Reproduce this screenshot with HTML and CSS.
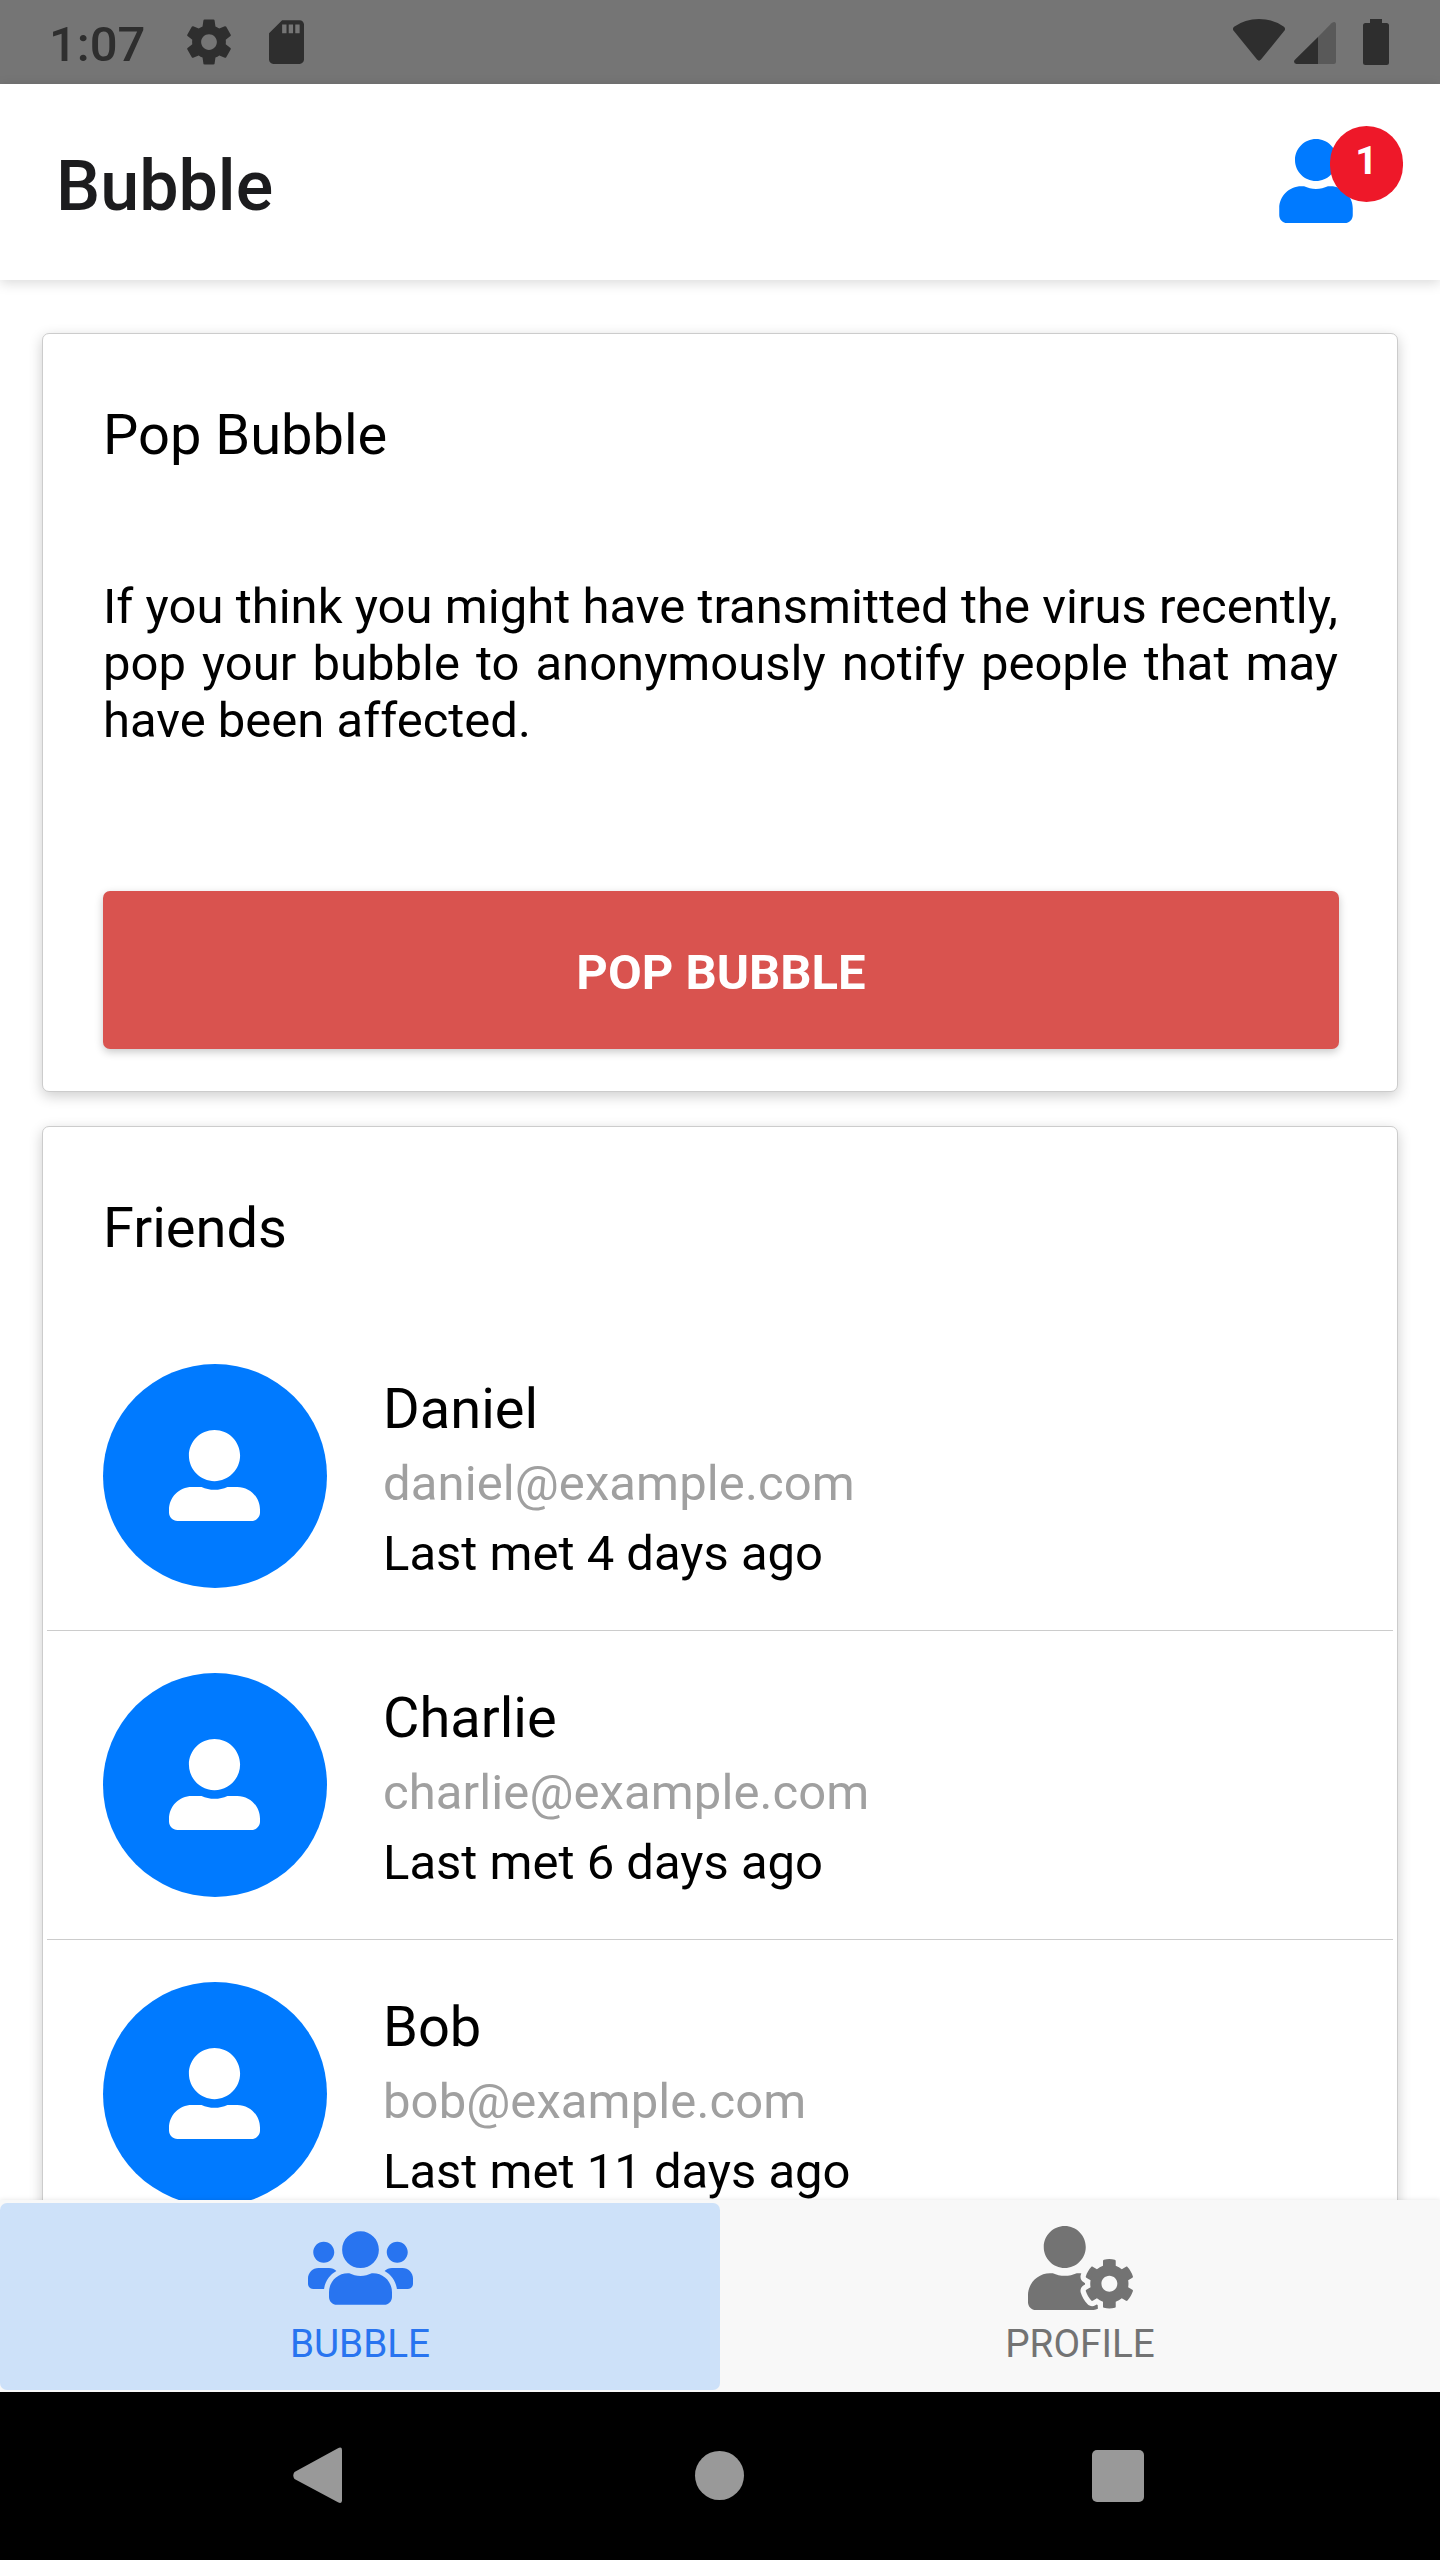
FILE: index.html
```html
<!DOCTYPE html>
<html lang="en">
<head>
<meta charset="utf-8">
<title>Bubble</title>
<link rel="stylesheet" href="styles.css">
</head>
<body>
<svg class="defs" aria-hidden="true">
  <symbol id="person" viewBox="0 0 512 512"><path d="M256 288c79.5 0 144-64.5 144-144S335.5 0 256 0 112 64.5 112 144s64.5 144 144 144zm128 32h-55.1c-22.2 10.2-46.9 16-72.9 16s-50.6-5.8-72.9-16H128C57.3 320 0 377.3 0 448v16c0 26.5 21.5 48 48 48h416c26.5 0 48-21.5 48-48v-16c0-70.7-57.3-128-128-128z"/></symbol>
</svg>
<div class="screen">
  <div class="status">
    <span class="clock">1:07</span>
    <svg class="st-gear" viewBox="0 0 24 24"><path d="M19.43 12.98c.04-.32.07-.64.07-.98s-.03-.66-.07-.98l2.11-1.65c.19-.15.24-.42.12-.64l-2-3.46c-.12-.22-.39-.3-.61-.22l-2.49 1c-.52-.4-1.08-.73-1.69-.98l-.38-2.65C14.46 2.18 14.25 2 14 2h-4c-.25 0-.46.18-.49.42l-.38 2.65c-.61.25-1.17.59-1.69.98l-2.49-1c-.23-.09-.49 0-.61.22l-2 3.46c-.13.22-.07.49.12.64l2.11 1.65c-.04.32-.07.65-.07.98s.03.66.07.98l-2.11 1.65c-.19.15-.24.42-.12.64l2 3.46c.12.22.39.3.61.22l2.49-1c.52.4 1.08.73 1.69.98l.38 2.65c.03.24.24.42.49.42h4c.25 0 .46-.18.49-.42l.38-2.65c.61-.25 1.17-.59 1.69-.98l2.49 1c.23.09.49 0 .61-.22l2-3.46c.12-.22.07-.49-.12-.64l-2.11-1.65zM12 15.500c-1.930 0-3.500-1.570-3.500-3.500s1.570-3.500 3.500-3.500 3.500 1.570 3.500 3.500-1.570 3.500-3.500 3.500z"/></svg>
    <svg class="st-sd" viewBox="4 2 16 20"><path d="M18 2h-8L4.020 8 4 20c0 1.100.9 2 2 2h12c1.100 0 2-.9 2-2V4c0-1.100-.9-2-2-2zm-6 6h-2V4h2v4zm3 0h-2V4h2v4zm3 0h-2V4h2v4z"/></svg>
    <span class="spacer"></span>
    <svg class="st-wifi" viewBox="0 0 54 44"><path d="M1.500 12.500Q-.8 10 1.500 8Q12.500 0 27 0T52.500 8Q54.800 10 52.500 12.500L29 41.500Q27 43.800 25 41.500Z"/></svg>
    <svg class="st-signal" viewBox="0 0 42 42"><path class="dim" d="M24 15 37.500 1.300Q39 0 40.500 0 42 .3 42 2V39.500Q42 42 39.500 42H24Z"/><path d="M24 15V42H2.500Q0 41.800 0 39.600 0 38.500 1.200 37.500Z"/></svg>
    <svg class="st-batt" viewBox="0 0 26 46"><path d="M7 0H19V4H23.500Q26 4 26 6.500V43.500Q26 46 23.500 46H2.500Q0 46 0 43.500V6.500Q0 4 2.500 4H7Z"/></svg>
  </div>
  <header class="header">
    <h1>Bubble</h1>
    <div class="requests">
      <svg viewBox="0 0 448 512"><path d="M224 256c70.7 0 128-57.3 128-128S294.7 0 224 0 96 57.3 96 128s57.3 128 128 128zm89.6 32h-16.7c-22.2 10.2-46.9 16-72.9 16s-50.6-5.8-72.9-16h-16.7C60.2 288 0 348.2 0 422.4V464c0 26.5 21.5 48 48 48h352c26.5 0 48-21.5 48-48v-41.6c0-74.2-60.2-134.4-134.4-134.4z"/></svg>
      <span class="badge">1</span>
    </div>
  </header>
  <main class="content">
    <section class="card">
      <h2>Pop Bubble</h2>
      <p class="note">If you think you might have transmitted the virus recently, pop your bubble to anonymously notify people that may have been affected.</p>
      <button class="pop" type="button">POP BUBBLE</button>
    </section>
    <section class="card">
      <h2>Friends</h2>
      <ul class="friends">
        <li>
          <span class="avatar"><svg><use href="#person"/></svg></span>
          <div class="info"><div class="name">Daniel</div><div class="mail">daniel@example.com</div><div class="met">Last met 4 days ago</div></div>
        </li>
        <li>
          <span class="avatar"><svg><use href="#person"/></svg></span>
          <div class="info"><div class="name">Charlie</div><div class="mail">charlie@example.com</div><div class="met">Last met 6 days ago</div></div>
        </li>
        <li>
          <span class="avatar"><svg><use href="#person"/></svg></span>
          <div class="info"><div class="name">Bob</div><div class="mail">bob@example.com</div><div class="met">Last met 11 days ago</div></div>
        </li>
      </ul>
    </section>
  </main>
  <nav class="tabs">
    <a class="tab active">
      <svg viewBox="0 0 640 512"><path d="M96 224c35.3 0 64-28.7 64-64s-28.7-64-64-64-64 28.7-64 64 28.7 64 64 64zm448 0c35.3 0 64-28.7 64-64s-28.7-64-64-64-64 28.7-64 64 28.7 64 64 64zm32 32h-64c-17.6 0-33.5 7.1-45.1 18.6 40.3 22.1 68.9 62 75.1 109.4h66c17.7 0 32-14.3 32-32v-32c0-35.3-28.7-64-64-64zm-256 0c61.9 0 112-50.1 112-112S381.9 32 320 32 208 82.1 208 144s50.1 112 112 112zm76.8 32h-8.3c-20.8 10-43.9 16-68.5 16s-47.6-6-68.5-16h-8.3C179.6 288 128 339.6 128 403.2V432c0 26.5 21.5 48 48 48h288c26.5 0 48-21.5 48-48v-28.8c0-63.6-51.6-115.2-115.2-115.2zm-223.7-13.4C161.5 263.1 145.6 256 128 256H64c-35.3 0-64 28.7-64 64v32c0 17.7 14.3 32 32 32h65.9c6.3-47.4 34.9-87.3 75.2-109.4z"/></svg>
      <span>BUBBLE</span>
    </a>
    <a class="tab">
      <svg viewBox="0 0 640 512"><path d="M610.5 373.3c2.6-14.1 2.6-28.5 0-42.6l25.8-14.9c3-1.7 4.3-5.2 3.3-8.5-6.7-21.6-18.2-41.2-33.2-57.4-2.3-2.5-6-3.1-9-1.4l-25.8 14.9c-10.9-9.3-23.4-16.5-36.9-21.3v-29.8c0-3.4-2.4-6.4-5.7-7.1-22.3-5-45-4.8-66.2 0-3.3.7-5.7 3.7-5.7 7.1v29.8c-13.5 4.8-26 12-36.9 21.3l-25.8-14.9c-2.9-1.7-6.7-1.1-9 1.4-15 16.2-26.5 35.8-33.2 57.4-1 3.3.4 6.8 3.3 8.5l25.8 14.9c-2.6 14.1-2.6 28.5 0 42.6l-25.8 14.9c-3 1.7-4.3 5.2-3.3 8.5 6.7 21.6 18.2 41.1 33.2 57.4 2.3 2.5 6 3.1 9 1.4l25.8-14.9c10.9 9.3 23.4 16.5 36.9 21.3v29.8c0 3.4 2.4 6.4 5.7 7.1 22.3 5 45 4.8 66.2 0 3.3-.7 5.7-3.7 5.7-7.1v-29.8c13.5-4.8 26-12 36.9-21.3l25.8 14.9c2.9 1.7 6.7 1.1 9-1.4 15-16.2 26.5-35.8 33.2-57.4 1-3.3-.4-6.8-3.3-8.5l-25.8-14.9zM496 400.5c-26.8 0-48.5-21.8-48.5-48.5s21.8-48.5 48.5-48.5 48.5 21.8 48.5 48.5-21.7 48.5-48.5 48.5zM224 256c70.7 0 128-57.3 128-128S294.7 0 224 0 96 57.3 96 128s57.3 128 128 128zm201.2 226.5c-2.3-1.2-4.6-2.6-6.8-3.900l-7.900 4.600c-6 3.400-12.800 5.300-19.600 5.300-10.900 0-21.400-4.600-28.900-12.600-18.300-19.800-32.300-43.900-40.200-69.600-5.500-17.700 1.900-36.400 17.900-45.700l7.900-4.600c-.1-2.600-.1-5.200 0-7.800l-7.900-4.600c-16-9.200-23.400-28-17.900-45.700.9-2.900 2.200-5.800 3.200-8.700-3.800-.3-7.500-1.200-11.400-1.200h-16.700c-22.200 10.200-46.900 16-72.900 16s-50.600-5.800-72.900-16h-16.700C60.200 288 0 348.200 0 422.400V464c0 26.500 21.500 48 48 48h352c10.100 0 19.500-3.200 27.200-8.500-1.200-3.800-2-7.700-2-11.800v-9.200z"/></svg>
      <span>PROFILE</span>
    </a>
  </nav>
  <div class="sysnav">
    <svg class="back" viewBox="0 0 50 57"><path d="M1.500 25 44.500 1.500Q49 -1 49 3V53.500Q49 57.500 44.500 55L1.500 32Q-1 28.500 1.500 25Z"/></svg>
    <span class="home"></span>
    <span class="recent"></span>
  </div>
</div>
</body>
</html>
```
FILE: styles.css
```css
* { box-sizing: border-box; }
body { margin: 0; background: #fff; font-family: Roboto, sans-serif; color: #000; }
h1, h2, p, ul { margin: 0; padding: 0; }
svg { display: block; flex: none; }
.defs { display: none; }

.screen {
  width: 1440px;
  height: 2560px;
  display: grid;
  grid-template-rows: 84px 196px 1920px 192px 168px;
  overflow: hidden;
}

/* Android status bar */
.status {
  display: flex;
  align-items: flex-start;
  background: #757575;
  fill: #2e2e2e;
  color: #2e2e2e;
  padding: 0 51px 0 49px;
}
.clock { font-size: 49px; font-weight: 500; line-height: 57px; width: 133px; padding-top: 16px; }
.st-gear { width: 54px; height: 54px; margin-top: 15px; }
.st-sd { width: 35px; height: 44px; margin: 20px 0 0 33px; }
.spacer { flex: 1; }
.st-wifi { width: 54px; height: 43px; margin-top: 19px; }
.st-signal { width: 42px; height: 42px; margin: 22px 0 0 8px; }
.st-batt { width: 26px; height: 46px; margin: 19px 0 0 27px; }
.dim { fill: #595959; }

.header {
  display: flex;
  justify-content: space-between;
  align-items: center;
  background: #fff;
  padding: 0 87px 0 56px;
  box-shadow: 0 3px 12px rgba(0, 0, 0, .15);
  z-index: 1;
}
.header h1 { font-size: 70px; font-weight: 500; line-height: 82px; padding-top: 7px; color: #1c1c1e; }
.requests { position: relative; width: 74px; height: 84px; margin-bottom: 2px; fill: #007aff; }
.requests svg { width: 74px; height: 84px; }
.badge {
  position: absolute;
  left: 51px;
  top: -13px;
  width: 73px;
  height: 76px;
  border-radius: 37px;
  background: #ee1829;
  color: #fff;
  font-size: 39px;
  font-weight: 700;
  line-height: 71px;
  text-align: center;
}

.content {
  display: flex;
  flex-direction: column;
  gap: 34px;
  padding: 53px 42px 0;
  overflow: hidden;
}
.card {
  flex: none;
  border: 1px solid #ccc;
  border-radius: 7px;
  background: #fff;
  padding-top: 68px;
  box-shadow: 0 4px 14px rgba(0, 0, 0, .2);
}
.card h2 { font-size: 56px; font-weight: 400; line-height: 66px; padding: 0 60px; }
.note { font-size: 49px; line-height: 57px; text-align: justify; margin: 110px 59px 142px 60px; }
.pop {
  display: block;
  width: 1236px;
  height: 158px;
  margin: 0 60px 42px;
  padding: 4px 0 0;
  border: 0;
  border-radius: 7px;
  background: #d9534f;
  color: #fff;
  font: 700 49px/57px Roboto, sans-serif;
  box-shadow: 0 3px 8px rgba(0, 0, 0, .22);
}

.friends { list-style: none; margin: 61px 4px 0; }
.friends li { display: flex; gap: 56px; padding: 42px 56px; border-bottom: 1px solid #ccc; }
.avatar {
  display: flex;
  align-items: center;
  justify-content: center;
  width: 224px;
  height: 224px;
  border-radius: 50%;
  background: #007aff;
  fill: #fff;
}
.avatar svg { width: 91px; height: 91px; margin: 0 1px 1px 0; }
.info { display: flex; flex-direction: column; gap: 13px; padding-top: 12px; font-size: 49px; line-height: 57px; }
.name { font-size: 56px; line-height: 66px; }
.mail { color: #a0a0a0; letter-spacing: .1px; }

.tabs {
  display: grid;
  grid-template-columns: 1fr 1fr;
  background: #f8f8f8;
  padding: 3px 0 2px;
  box-shadow: 0 0 5px rgba(0, 0, 0, .1);
  z-index: 1;
}
.tab {
  display: flex;
  flex-direction: column;
  align-items: center;
  padding-top: 23px;
  border-radius: 7px;
  color: #737373;
  fill: currentColor;
  font-size: 38.7px;
  line-height: 46px;
}
.tab svg { width: 105px; height: 84px; }
.tab span { margin-top: 11px; }
.tab.active { background: #cde1f9; color: #2874f0; }

/* Android navigation bar */
.sysnav { display: flex; align-items: center; background: #000; fill: #999; padding: 0 0 1px 293px; z-index: 1; }
.back { width: 50px; height: 57px; }
.home { width: 49px; height: 49px; margin-left: 352px; border-radius: 50%; background: #999; }
.recent { width: 52px; height: 52px; margin-left: 348px; border-radius: 5px; background: #999; }
```
